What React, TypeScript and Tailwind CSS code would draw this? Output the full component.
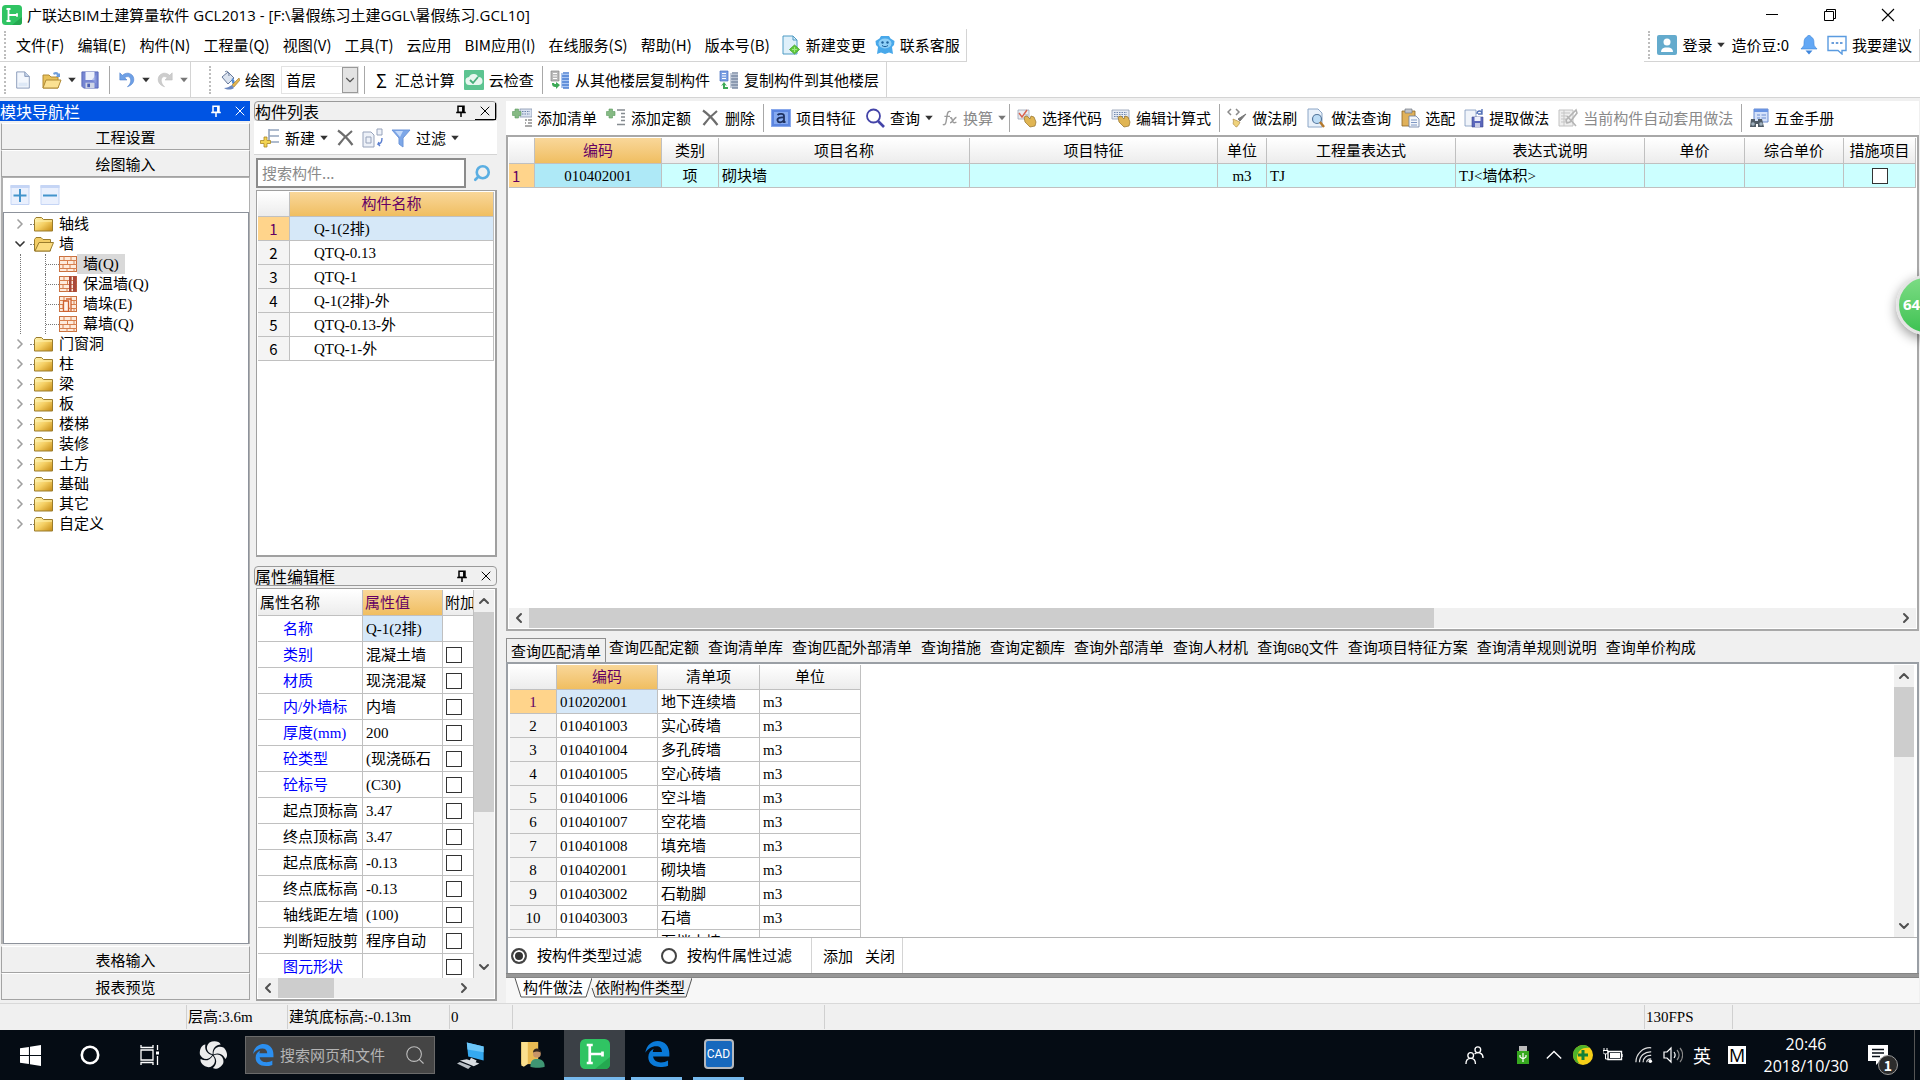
import { useState } from 'react';
import type { ReactNode } from 'react';
import { X, Search, ChevronUp, ChevronDown, ChevronLeft, ChevronRight } from 'lucide-react';

/* ---------- icons ---------- */

function Svg({ children, className = 'w-5 h-5', box = 20 }: { children: ReactNode; className?: string; box?: number }) {
  return (
    <svg viewBox={`0 0 ${box} ${box}`} className={`${className} shrink-0`} fill="none" aria-hidden="true">
      {children}
    </svg>
  );
}

const LogoIcon = ({ className = 'w-5 h-5' }: { className?: string }) => (
  <Svg className={className}>
    <rect x="0" y="0" width="20" height="20" rx="3.5" fill="#30c463" />
    <path d="M10 20 20 12v5a3 3 0 0 1-3 3z" fill="#24a850" />
    <path d="M4.500 4h4M6.500 4v12M4.500 16h4M6.500 10H15M15 8.300v3.400" stroke="#fff" strokeWidth="1.800" />
  </Svg>
);

const NewFileIcon = () => (
  <Svg className="w-[18px] h-[18px]">
    <path d="M3 1h9l5 5v13H3z" fill="#f3f7fd" stroke="#8294b5" />
    <path d="M12 1v5h5" fill="#c5d4ea" stroke="#8294b5" />
    <path d="M5 13h10v4H5z" fill="#dde8f6" />
  </Svg>
);

const OpenIcon = ({ className = 'w-5 h-5' }: { className?: string }) => (
  <Svg className={className}>
    <path d="M1 5h6l2 2h7v11H1z" fill="#e8c15a" stroke="#b08a35" />
    <path d="M4 10h15l-3 8H1z" fill="#fbe192" stroke="#b08a35" />
    <path d="M11 3c3-2 5-1 6 1l1-1v4h-4l1-2c-1-1-2-1-3 0z" fill="#6f9edb" />
  </Svg>
);

const SaveIcon = () => (
  <Svg className="w-[18px] h-[18px]">
    <path d="M1 1h18v18H3l-2-2z" fill="#7585d2" stroke="#5565b5" />
    <path d="M5 1h10v9H5z" fill="#edf1fb" />
    <path d="M5 13h10v6H5z" fill="#cfd5e6" />
    <path d="M7 14h3v4H7z" fill="#4b5fb5" />
    <path d="M12 10 17 4v10z" fill="#95a5e5" opacity=".6" />
  </Svg>
);

const UndoIcon = ({ off = false }: { off?: boolean }) => (
  <Svg className={off ? 'w-[18px] h-[18px] -scale-x-100' : 'w-[18px] h-[18px]'}>
    <path d="M2 2v8h8L7.500 7.500C11 4.500 15 7 14 12c-.5 2.500-2 4-3.500 5.500C15 16 18 13 17.500 8.500 17 3 10 0 4.800 4.800z" fill={off ? '#cdcdcd' : '#6ea0e6'} stroke={off ? '#bcbcbc' : '#4a7ccb'} strokeWidth=".6" />
  </Svg>
);

const PaintIcon = () => (
  <Svg>
    <path d="M2 7 8 2l6 6-6 6z" fill="#dbe3ef" stroke="#66799b" />
    <path d="M5 2c2-2 4 0 4 4" stroke="#66799b" />
    <path d="M12 8c3 2 3 4 2 7-2-1-3-4-2-7z" fill="#4e8ad6" />
    <path d="m19 8-7 7 2 2 6-7z" fill="#e2b44f" stroke="#9a7428" strokeWidth=".6" />
    <path d="M4 18c3 2 7 2 10 0l-2-3c-3 2-5 3-8 3z" fill="#6b87bf" />
  </Svg>
);

const CloudCheckIcon = () => (
  <Svg>
    <rect width="20" height="20" rx="1" fill="#5cc491" />
    <path d="M10 4a4 4 0 0 1 4 3 4 4 0 0 1 1 8H6a4 4 0 0 1-1-8 5 5 0 0 1 5-3z" fill="#fff" opacity=".85" />
    <path d="m6 10 3 3 5-6" stroke="#46ad7a" strokeWidth="1.800" />
  </Svg>
);

const CopyFloorIcon = ({ flip = false }: { flip?: boolean }) => (
  <Svg>
    <path d="M1 1h8v10H1z" fill={flip ? '#7ba0e3' : '#b9b9b9'} stroke={flip ? '#4971c0' : '#888'} strokeWidth=".7" />
    <path d="M3 3.500h4M3 6h4M3 8.500h4" stroke="#fff" />
    <path d="M13 4h6v14h-6z" fill={flip ? '#b9c3d3' : '#a9c6f3'} />
    <path d="M13 3h6M12 6h7M12 9h7M12 12h7M12 15h7M13 18h6" stroke={flip ? '#7c8ca5' : '#4b7fd2'} strokeWidth="1.500" />
    <path d="M12 3v15" stroke={flip ? '#8c9cb5' : '#5b8ede'} />
    <path d={flip ? 'M9 19H4v-4l-2 1 3-4 3 4-2-1v2h3z' : 'M2 13c0 3 1 4 4 4v2l4-4-4-3v2c-1 0-2 0-2-1z'} fill="#3ca956" />
  </Svg>
);

const ChangeIcon = () => (
  <Svg>
    <path d="M2 1h10l4 4v14H2z" fill="#dff0fa" stroke="#4f9bc4" />
    <path d="M12 1v4h4" stroke="#4f9bc4" />
    <path d="m13.500 10 5 4.500-5 4.500-5-4.500z" fill="#62cb3c" stroke="#3c9a22" strokeWidth=".8" />
    <path d="M13.500 12v5M11 14.500h5" stroke="#9fe685" />
  </Svg>
);

const MascotIcon = () => (
  <Svg>
    <path d="M6 1h8l1.500 2.500L19.500 6 19 10l-2 2 1 7-4-1.500L10 19l-4-1.500L2 19l1-7-2-2L.500 6l4-2.500z" fill="#48a8ea" />
    <ellipse cx="10" cy="8.500" rx="6.500" ry="5" fill="#8fd0f7" />
    <circle cx="7.500" cy="7.500" r="1.200" fill="#1b5f99" />
    <circle cx="12.500" cy="7.500" r="1.200" fill="#1b5f99" />
    <path d="M7 10.500c2 1.500 4 1.500 6 0" stroke="#1b5f99" />
  </Svg>
);

const LoginIcon = () => (
  <Svg>
    <rect width="20" height="20" rx="2" fill="#64abcd" />
    <circle cx="10" cy="7" r="3.500" fill="#fff" />
    <path d="M4 17c0-3 2-4 4-4.500h4c2 .5 4 1.500 4 4.500z" fill="#fff" />
  </Svg>
);

const BellIcon = () => (
  <Svg>
    <path d="M10 0c1 0 1.500.8 1.500 1.600C15 3 15 6 15 9c0 3 2 3 3 5H2c1-2 3-2 3-5 0-3 0-6 3.500-7.400C8.500.8 9 0 10 0z" fill="#63a8f5" stroke="#4187d6" strokeWidth=".6" />
    <path d="M6.500 15.500h7L10 19.500z" fill="#3f86dc" />
  </Svg>
);

const SuggestIcon = () => (
  <Svg>
    <path d="M1 1.500h18v14h-4V19l-4-3.500H1z" fill="#fff" stroke="#5a9be0" strokeWidth="1.400" />
    <path d="M4.500 8h2.500M8.800 8h2.500M13 8h2.500" stroke="#3c80cf" strokeWidth="1.600" />
  </Svg>
);

const PlusGreen = () => <path d="M3 1h3.500v2.500H9v4H6.500V10H3V7.500H.5v-4H3z" fill="#86ba84" stroke="#5d9a5f" strokeWidth=".6" />;

const AddListIcon = () => (
  <Svg>
    <rect x="8" y="1" width="12" height="8" fill="#dbe3f0" stroke="#8795ae" strokeWidth=".8" />
    <path d="M10 3.500h8M10 6h8" stroke="#6c82aa" strokeDasharray="1.500 1" />
    <path d="M13 12h2M16 12h4M13 15h1M16 15h4M13 18h7" stroke="#8d8d8d" strokeWidth="1.300" />
    <PlusGreen />
  </Svg>
);

const AddQuotaIcon = () => (
  <Svg>
    <path d="M11 2h8M15 5.500h4M15 9h4M15 12.500h4M11 16.500h8" stroke="#858b90" strokeWidth="1.400" />
    <PlusGreen />
  </Svg>
);

const CrossIcon = () => (
  <Svg>
    <path d="M3 2.500C8 6 13 11 17.500 17M17 3C12 7 7 12 3.500 17" stroke="#6d6d6d" strokeWidth="2.200" />
  </Svg>
);

const FeatureIcon = () => (
  <Svg>
    <rect x=".5" y="1.500" width="19" height="17" fill="#5b85e0" stroke="#88a8ec" />
    <path d="M3 4h14v12H3z" fill="#86aaf0" />
    <path d="M6.500 7C8 5.500 13 5 13 8v6h1.500M13 9.500C9 9 6 10 6.500 12.500 7 15 11 15 13 12" stroke="#1f3261" strokeWidth="1.800" />
  </Svg>
);

const FindIcon = ({ color = '#4444a8' }: { color?: string }) => (
  <Svg>
    <circle cx="8.500" cy="8" r="6.500" stroke={color} strokeWidth="1.800" />
    <path d="m13 13 6 6" stroke={color} strokeWidth="2.600" />
  </Svg>
);

const FxIcon = () => (
  <Svg className="w-4 h-5">
    <path d="M11 2c-3-1-4 1-4.500 4L5 15c-.5 3-2 4-4 3M3 8h7M10 10c2-1 2 0 3 3s2 4 5 2M18 9c-3 1-5 7-8 7" stroke="#9b9b9b" strokeWidth="1.800" />
  </Svg>
);

const Hand = () => <path d="m7 9 3-1 3 3 1-3 3 1 2 5-1 4-5 1-5-5z" fill="#e0b553" stroke="#94702a" strokeWidth=".7" />;

const SelectCodeIcon = () => (
  <Svg>
    <path d="M1 2h11v9H1z" fill="#e9edf3" stroke="#9aa5b5" strokeWidth=".8" />
    <path d="m2 5 3 4 5-7" stroke="#d9614c" strokeWidth="1.400" />
    <path d="M8 7h3" stroke="#9aa5b5" />
    <Hand />
  </Svg>
);

const EditFormulaIcon = () => (
  <Svg>
    <path d="M1 2h17v9H1z" fill="#e6ebf3" stroke="#8e9bb1" strokeWidth=".8" />
    <path d="M3 4.500h13M3 6.500h13M3 8.500h13" stroke="#7187ad" strokeDasharray="1.500 1" />
    <Hand />
  </Svg>
);

const BrushIcon = () => (
  <Svg>
    <path d="M4 1 1 4l3 3M9 1l3 3-3 3" stroke="#8a8a8a" strokeWidth="1.500" />
    <path d="m19 6-6 7-2-2z" fill="#777" stroke="#777" />
    <path d="M6 11 13 14c-1 3-3 5-4 5-1-2-3-2-3-4 1-1 0-3 0-4z" fill="#efd27c" stroke="#a5823a" strokeWidth=".6" />
  </Svg>
);

const PageFindIcon = () => (
  <Svg>
    <path d="M2 1h10l4 4v14H2z" fill="#e9f1fa" stroke="#8ca6c6" />
    <circle cx="11" cy="11" r="4.500" fill="#bcdcf5" stroke="#55779c" strokeWidth="1.200" />
    <path d="m14 14 4 5" stroke="#b5792c" strokeWidth="2.400" />
  </Svg>
);

const PasteIcon = () => (
  <Svg>
    <path d="M2 3h13v15H2z" fill="#e0b15a" stroke="#8c6526" strokeWidth=".8" />
    <path d="M5 1h7v4H5z" fill="#bfc4cc" stroke="#737983" strokeWidth=".7" />
    <path d="M9 8h7l3 3v8H9z" fill="#f4f7fb" stroke="#697fa5" strokeWidth=".8" />
    <path d="M11 12h6M11 14.500h6M11 17h6" stroke="#7e97c4" />
  </Svg>
);

const ExtractIcon = () => (
  <Svg>
    <path d="M1 2h11v16H1z" fill="#f0f4fa" stroke="#7f97bd" strokeWidth=".8" />
    <path d="M13 6c0-4 5-4 5 0M18 1v5h-4" stroke="#5472b8" strokeWidth="1.400" />
    <path d="M8 9h11v10H8z" fill="#5b67bb" stroke="#3d478f" strokeWidth=".6" />
    <path d="M10.500 9h6v4h-6z" fill="#eef0fa" />
    <path d="M11 15h5v4h-5z" fill="#c7cbe6" />
  </Svg>
);

const AutoApplyIcon = () => (
  <Svg>
    <path d="M1 2h14v16H1z" fill="#eee" stroke="#c2c2c2" />
    <path d="M3 5h9M3 8h6M3 11h5M3 14h6M6 2v16" stroke="#c5c5c5" />
    <path d="M18 2 8 12l1 3 3-1 7-9zM9 8l9 10" stroke="#b4b4b4" strokeWidth="1.600" />
  </Svg>
);

const HardwareIcon = () => (
  <Svg>
    <path d="M5 1h14v13H5z" fill="#d5e2fa" stroke="#6b8cd0" />
    <path d="M5 1h14v3H5z" fill="#6a94e2" />
    <path d="M8 7h3M12.500 7H17M8 10h3M12.500 10H17" stroke="#6b8cd0" />
    <path d="M2 11h4v2h3v-2h4l2 8H9v-3H7v3H1z" fill="#4f5b66" />
    <circle cx="4" cy="16" r="1.800" fill="#9fb0bd" />
    <circle cx="12" cy="16" r="1.800" fill="#9fb0bd" />
  </Svg>
);

const NewItemIcon = () => (
  <Svg>
    <path d="M9 1v14M9 2h10M9 8h10M9 14h10" stroke="#94a5be" strokeWidth="1.600" />
    <path d="M4 9h3v3.500h3.500v3H7V19H4v-3.500H.5v-3H4z" fill="#f3d451" stroke="#a98724" strokeWidth=".8" />
  </Svg>
);

const CopyItemIcon = () => (
  <Svg className="w-[22px] h-5">
    <path d="M0 4h8l3 3v12H0z" fill="#edf1f8" stroke="#97a3bb" />
    <path d="M3 9h5v6H3z" stroke="#97a3bb" />
    <path d="M14 1h5v6h-5z" fill="#edf1f8" stroke="#97a3bb" />
    <path d="M19 10c0 4-1 6-4 6l1-2M15 16l2 2" stroke="#5b7fd0" strokeWidth="1.400" />
  </Svg>
);

const FilterIcon = () => (
  <Svg>
    <path d="M1 2h18l-7 8v9l-4-3v-6z" fill="#7da7e8" stroke="#6c95d9" />
    <path d="M4 3h8L9 9z" fill="#c4dafa" />
  </Svg>
);

const PinIcon = () => (
  <Svg className="w-3 h-3.5">
    <path d="M5 2h10v10H5zM2 12.500h16M10 13v7M13 2v10" stroke="currentColor" strokeWidth="2.500" />
  </Svg>
);

const FolderIcon = () => (
  <svg viewBox="0 0 19 16" className="w-[19px] h-4 shrink-0" aria-hidden="true">
    <defs>
      <linearGradient id="folder" x1="0" y1="0" x2="1" y2="1">
        <stop offset="0" stopColor="#fff6b8" />
        <stop offset=".5" stopColor="#f5cf63" />
        <stop offset="1" stopColor="#c58a13" />
      </linearGradient>
    </defs>
    <path d="M.5 3.500 2 1.500h5.500l2 2h9v11.500H.500z" fill="url(#folder)" stroke="#9a7c2c" />
    <path d="M1 5h17" stroke="#fff3b0" />
  </svg>
);

const FolderOpenIcon = () => (
  <svg viewBox="0 0 20 16" className="w-5 h-4 shrink-0" aria-hidden="true">
    <path d="M.5 3.500 2 1.500h5l2 2h7.500V15H.500z" fill="#f2cd66" stroke="#9a7c2c" />
    <path d="M5 6.500h14.500L16 15H1z" fill="#fbdc80" stroke="#9a7c2c" />
  </svg>
);

const BrickIcon = ({ kind }: { kind: string }) => (
  <svg viewBox="0 0 18 16" className="w-[18px] h-4 shrink-0" fill="none" aria-hidden="true">
    <rect x=".5" y=".5" width="17" height="15" fill="#fdebdc" stroke="#c9703f" />
    <path d="M0 4.500h18M0 8.500h18M0 12.500h18M5 0v4.500M12 0v4.500M8.500 4.500v4M15 4.500v4M4 8.500v4M11 8.500v4M8 12.500v3.500M15 12.500v3.500" stroke="#d6804f" />
    {kind === 'insulated' && <path d="M10 0h2.500v16H10zM14 0h3.500v16H14z" fill="#a8493a" />}
    {kind === 'pier' && <path d="M4.500 5h5v10.500h-5zM7 3h5v12" fill="#fff3ea" stroke="#cf6230" strokeWidth="1.300" />}
  </svg>
);

const Caret = ({ off = false }: { off?: boolean }) => (
  <Svg className="w-2 h-1.5" box={8}>
    <path d="M-1 1h10L4 7z" fill={off ? '#777' : '#333'} />
  </Svg>
);

const Grip = () => <span className="w-[3px] h-7 border-l-2 border-dotted border-[#bdbdbd]" />;
const Sep = () => <span className="-ml-px -mr-0.5 w-px h-7 bg-[#a8a8a8]" />;

/* ---------- data ---------- */

const menus = ['文件(F)', '编辑(E)', '构件(N)', '工程量(Q)', '视图(V)', '工具(T)', '云应用', 'BIM应用(I)', '在线服务(S)', '帮助(H)', '版本号(B)'];

const walls = [
  { label: '墙(Q)', kind: 'plain' },
  { label: '保温墙(Q)', kind: 'insulated' },
  { label: '墙垛(E)', kind: 'pier' },
  { label: '幕墙(Q)', kind: 'plain' },
];

const folders = ['门窗洞', '柱', '梁', '板', '楼梯', '装修', '土方', '基础', '其它', '自定义'];

const components = ['Q-1(2排)', 'QTQ-0.13', 'QTQ-1', 'Q-1(2排)-外', 'QTQ-0.13-外', 'QTQ-1-外'];

const attributes = [
  { name: '名称', value: 'Q-1(2排)', blue: true },
  { name: '类别', value: '混凝土墙', blue: true },
  { name: '材质', value: '现浇混凝', blue: true },
  { name: '内/外墙标', value: '内墙', blue: true },
  { name: '厚度(mm)', value: '200', blue: true },
  { name: '砼类型', value: '(现浇砾石', blue: true },
  { name: '砼标号', value: '(C30)', blue: true },
  { name: '起点顶标高', value: '3.47' },
  { name: '终点顶标高', value: '3.47' },
  { name: '起点底标高', value: '-0.13' },
  { name: '终点底标高', value: '-0.13' },
  { name: '轴线距左墙', value: '(100)' },
  { name: '判断短肢剪', value: '程序自动' },
  { name: '图元形状', value: '', blue: true },
];

const queryTabs = ['查询匹配清单', '查询匹配定额', '查询清单库', '查询匹配外部清单', '查询措施', '查询定额库', '查询外部清单', '查询人材机', '查询GBQ文件', '查询项目特征方案', '查询清单规则说明', '查询单价构成'];

const matches = [
  ['010202001', '地下连续墙'],
  ['010401003', '实心砖墙'],
  ['010401004', '多孔砖墙'],
  ['010401005', '空心砖墙'],
  ['010401006', '空斗墙'],
  ['010401007', '空花墙'],
  ['010401008', '填充墙'],
  ['010402001', '砌块墙'],
  ['010403002', '石勒脚'],
  ['010403003', '石墙'],
  ['010403004', '石挡土墙'],
];

const headCell = 'border-r border-b border-[#c0c0c0] bg-linear-to-b from-white to-[#ececec] font-normal p-0';
const activeHead = 'border-r border-b border-[#c0c0c0] bg-linear-to-b from-[#f9d799] to-[#f0be60] font-normal p-0 text-[#640064]';
const cell = 'border-r border-b border-[#c0c0c0] p-0 px-[3px] overflow-hidden';
const numberCell = 'border-r border-b border-[#c0c0c0] p-0 text-center';
const nameCell = 'border-r border-b border-[#c0c0c0] p-0 pl-[25px]';
const checkbox = 'appearance-none block w-4 h-4 border border-[#333] bg-white checked:bg-[#333]';

/* ---------- small parts ---------- */

function Tool({ icon, label, caret = false, off = false }: { icon: ReactNode; label: string; caret?: boolean; off?: boolean }) {
  return (
    <button disabled={off} className={off ? 'flex items-center gap-[5px] text-[#8a8a8a]' : 'flex items-center gap-[5px]'}>
      {icon}
      {label}
      {caret && <Caret off={off} />}
    </button>
  );
}

function PanelTitle({ title, raised = false }: { title: string; raised?: boolean }) {
  return (
    <div className="flex items-center h-5 border border-[#9a9a9a] rounded-sm bg-[#f0f0f0] text-base leading-4 shrink-0">
      <h2 className="flex-1">{title}</h2>
      <button aria-label="固定" className="px-1"><PinIcon /></button>
      <button aria-label="关闭" className={raised ? 'px-0.5 ml-1 border-r border-b border-black' : 'px-0.5 ml-1'}>
        <X className="w-4 h-4" strokeWidth={1.5} />
      </button>
    </div>
  );
}

function NavButton({ label }: { label: string }) {
  return (
    <button className="w-full h-[27px] border border-[#a3a3a3] border-t-white bg-[#f0f0f0] text-center shrink-0">
      {label}
    </button>
  );
}

function TreeFolder({ label }: { label: string }) {
  return (
    <li>
      <button className="flex items-center h-5 pl-2">
        <ChevronRight className="w-4 h-4 text-[#a0a0a0]" strokeWidth={2.5} />
        <span className="ml-0.5 w-1 border-t border-dotted border-[#888]" />
        <FolderIcon />
        <span className="ml-1.5">{label}</span>
      </button>
    </li>
  );
}

/* ---------- regions ---------- */

function TitleBar() {
  return (
    <header className="flex items-center h-[29px] pl-[2px] shrink-0">
      <LogoIcon />
      <h1 className="ml-[5px] flex-1 font-['Open_Sans','Noto_Sans_CJK_SC',sans-serif]">广联达BIM土建算量软件 GCL2013 - [F:\暑假练习土建GGL\暑假练习.GCL10]</h1>
      <div className="flex items-center gap-[38px] pr-[22px]">
        <button aria-label="最小化" className="w-5 h-5">
          <Svg><path d="M4 9.500h12" stroke="#000" /></Svg>
        </button>
        <button aria-label="还原" className="w-5 h-5">
          <Svg><path d="M4.500 6.500h9v9h-9zM6.500 6.500v-2h9v9h-2" stroke="#000" /></Svg>
        </button>
        <button aria-label="关闭窗口" className="w-5 h-5">
          <Svg><path d="m4 4 12 12M16 4 4 16" stroke="#000" strokeWidth="1.100" /></Svg>
        </button>
      </div>
    </header>
  );
}

function MenuBar() {
  return (
    <div className="flex justify-between h-[33px] shrink-0">
      <nav className="flex items-center gap-[13px] pl-1 pr-1.5 border-r border-b border-[#d4d4d4]">
        <Grip />
        <div className="flex items-center gap-[13px] -ml-1">
          {menus.map((m) => (
            <button key={m}>{m}</button>
          ))}
        </div>
        <div className="flex items-center gap-[9px] -ml-0.5">
          <Tool icon={<ChangeIcon />} label="新建变更" />
          <Tool icon={<MascotIcon />} label="联系客服" />
        </div>
      </nav>
      <div className="flex items-center gap-1.5 pl-1 pr-[7px] border-b border-r border-[#d4d4d4]">
        <Grip />
        <Tool icon={<LoginIcon />} label="登录" caret />
        <button>造价豆:0</button>
        <button aria-label="消息" className="ml-1 mr-0.5"><BellIcon /></button>
        <Tool icon={<SuggestIcon />} label="我要建议" />
      </div>
    </div>
  );
}

function MainToolbar() {
  return (
    <div className="flex h-9 border-b border-[#d4d4d4] shrink-0">
      <div className="flex items-center pl-1 pr-0.5 border-r border-[#d4d4d4]">
        <Grip />
        <button aria-label="新建" className="px-[7px]"><NewFileIcon /></button>
        <button aria-label="打开" className="flex items-center gap-1.5 px-[3px]"><OpenIcon /><Caret /></button>
        <button aria-label="保存" className="px-0.5"><SaveIcon /></button>
        <span className="mx-2 w-px h-7 bg-[#a8a8a8]" />
        <button aria-label="撤销" className="flex items-center gap-1.5"><UndoIcon /><Caret /></button>
        <button aria-label="重做" className="flex items-center gap-1.5 ml-1.5"><UndoIcon off /><Caret off /></button>
      </div>
      <div className="flex items-center gap-[9px] pl-[18px] pr-[7px] border-r border-[#d4d4d4]">
        <Grip />
        <div className="flex items-center gap-1.5 -ml-px">
          <Tool icon={<PaintIcon />} label="绘图" />
          <div className="relative w-[78px] h-7 border border-[#e3e3e3]">
            <select aria-label="楼层" className="appearance-none w-full h-full pl-1 leading-6 bg-white">
              <option>首层</option>
            </select>
            <span className="absolute inset-y-0 right-0 w-4 flex items-center justify-center border border-[#999] bg-[#e3e3e3] pointer-events-none">
              <ChevronDown className="w-3.5 h-3.5 text-[#555]" />
            </span>
          </div>
        </div>
        <span className="-ml-1 w-px h-7 bg-[#a8a8a8]" />
        <button className="flex items-center gap-2 ml-0.5"><span className="text-lg">Σ</span>汇总计算</button>
        <Tool icon={<CloudCheckIcon />} label="云检查" />
        <Sep />
        <Tool icon={<CopyFloorIcon />} label="从其他楼层复制构件" />
        <Tool icon={<CopyFloorIcon flip />} label="复制构件到其他楼层" />
      </div>
    </div>
  );
}

function NavPanel() {
  const [wall, setWall] = useState('墙(Q)');

  return (
    <aside className="w-[250px] flex flex-col shrink-0">
      <div className="flex items-center h-5 bg-[#0054e3] text-white text-base leading-4 shrink-0">
        <h2 className="flex-1">模块导航栏</h2>
        <button aria-label="固定" className="px-1"><PinIcon /></button>
        <button aria-label="关闭" className="px-0.5 ml-1"><X className="w-4 h-4" strokeWidth={1.5} /></button>
      </div>
      <div className="flex-1 flex flex-col min-h-0 mt-0.5 ml-px pb-[3px]">
        <NavButton label="工程设置" />
        <NavButton label="绘图输入" />
        <div className="flex-1 flex flex-col min-h-0 mb-0.5 border-l-2 border-[#b0b0b0] border-t border-r bg-white">
          <div className="flex items-center gap-2.5 h-[34px] pl-[7px]">
            {['M10 4v13M3.500 10.500h13', 'M3 10.500h14'].map((d) => (
              <button key={d} aria-label={d.length > 12 ? '展开' : '折叠'} className="w-5 h-5">
                <Svg>
                  <path d="M1 .500h18v19H1z" fill="#eaf0fd" stroke="#c5d5f5" />
                  <path d="M.500 0h19v3H.500z" fill="#c5d5f5" />
                  <path d={d} stroke="#4394cc" strokeWidth="2" />
                </Svg>
              </button>
            ))}
          </div>
          <ul className="flex-1 min-h-0 border border-[#8d929b] pt-px font-['Liberation_Serif','Noto_Sans_CJK_SC',sans-serif]">
            <TreeFolder label="轴线" />
            <li>
              <button className="flex items-center h-5 pl-2">
                <ChevronDown className="w-4 h-4 text-[#333]" strokeWidth={2.5} />
                <span className="ml-0.5 w-1 border-t border-dotted border-[#888]" />
                <FolderOpenIcon />
                <span className="ml-[5px]">墙</span>
              </button>
              <ul className="ml-4 pl-6 border-l border-dotted border-[#777]">
                {walls.map((w) => (
                  <li key={w.label} className="flex items-center h-5 border-l border-dotted border-[#777]">
                    <span className="w-[13px] border-t border-dotted border-[#777]" />
                    <button onClick={() => setWall(w.label)} className="flex items-center h-5">
                      <BrickIcon kind={w.kind} />
                      <span className={wall === w.label ? 'h-5 px-1.5 bg-[#d9d9d9]' : 'h-5 px-1.5'}>{w.label}</span>
                    </button>
                  </li>
                ))}
              </ul>
            </li>
            {folders.map((f) => (
              <TreeFolder key={f} label={f} />
            ))}
          </ul>
        </div>
        <NavButton label="表格输入" />
        <NavButton label="报表预览" />
      </div>
    </aside>
  );
}

function ComponentPanel() {
  const [selected, setSelected] = useState(0);

  return (
    <section className="flex-1 min-h-0 flex flex-col">
      <PanelTitle title="构件列表" raised />
      <div className="flex items-center gap-[7px] h-[34px] pl-1.5 bg-white border-b border-[#d4d4d4] shrink-0">
        <Tool icon={<NewItemIcon />} label="新建" caret />
        <button aria-label="删除"><CrossIcon /></button>
        <button aria-label="复制"><CopyItemIcon /></button>
        <Tool icon={<FilterIcon />} label="过滤" caret />
      </div>
      <div className="flex items-center gap-[7px] h-[35px] pl-0.5 shrink-0">
        <input aria-label="搜索构件" placeholder="搜索构件..." className="w-[210px] h-[30px] px-1 border-2 border-[#8b8b8b] bg-white placeholder:text-[#8a8a8a]" />
        <button aria-label="搜索"><Search className="w-[18px] h-[18px] -scale-x-100 text-[#5aaee2]" strokeWidth={3.5} /></button>
      </div>
      <div className="flex-1 min-h-0 ml-0.5 border border-[#a0a0a0] border-r-2 border-b-2 bg-white p-px font-['Liberation_Serif','Noto_Sans_CJK_SC',sans-serif]">
        <table className="w-[236px] table-fixed border-separate border-spacing-0">
          <colgroup>
            <col className="w-8" />
            <col />
          </colgroup>
          <thead>
            <tr className="h-[25px]">
              <th className={headCell} />
              <th className={activeHead}>构件名称</th>
            </tr>
          </thead>
          <tbody>
            {components.map((name, i) => (
              <tr key={name} className="h-6" onClick={() => setSelected(i)}>
                <td className={`${numberCell} font-['Noto_Sans_CJK_SC',sans-serif] ${selected === i ? 'bg-[#ffd48b] text-[#640064]' : 'bg-[#f4f4f4]'}`}>{i + 1}</td>
                <td className={`border-r border-b border-[#c0c0c0] p-0 pl-6 ${selected === i ? 'bg-[#d6e8f8]' : ''}`}>{name}</td>
              </tr>
            ))}
          </tbody>
        </table>
      </div>
    </section>
  );
}

function AttributePanel() {
  return (
    <section className="h-[437px] flex flex-col shrink-0 mt-[9px] pb-0.5">
      <PanelTitle title="属性编辑框" />
      <div className="flex-1 min-h-0 mt-0.5 ml-0.5 flex flex-col border border-[#a0a0a0] border-r-2 border-b-2 bg-white p-px font-['Liberation_Serif','Noto_Sans_CJK_SC',sans-serif]">
        <div className="flex-1 min-h-0 flex">
          <div className="flex-1 min-w-0 overflow-hidden">
            <table className="w-[216px] table-fixed border-separate border-spacing-0">
              <colgroup>
                <col className="w-[105px]" />
                <col className="w-20" />
                <col />
              </colgroup>
              <thead>
                <tr className="h-[26px]">
                  <th className={headCell}><span className="flex pl-0.5">属性名称</span></th>
                  <th className={activeHead}><span className="flex pl-0.5">属性值</span></th>
                  <th className={headCell}><span className="flex overflow-hidden whitespace-nowrap pl-0.5">附加</span></th>
                </tr>
              </thead>
              <tbody>
                {attributes.map((a, i) => (
                  <tr key={a.name} className="h-[26px] leading-5 whitespace-nowrap">
                    <td className={a.blue ? `${nameCell} text-[#0000ff]` : nameCell}>{a.name}</td>
                    <td className={i === 0 ? `${cell} bg-[#d6e8f8]` : cell}>{a.value}</td>
                    <td className={cell}>{i > 0 && <input type="checkbox" aria-label={`${a.name}附加`} className={checkbox} />}</td>
                  </tr>
                ))}
              </tbody>
            </table>
          </div>
          <div className="w-5 flex flex-col items-center bg-[#f0f0f0]">
            <ChevronUp className="w-4 h-[22px] text-[#505050]" strokeWidth={3} />
            <div className="w-full h-[200px] bg-[#cdcdcd]" />
            <ChevronDown className="w-4 h-[22px] mt-auto text-[#505050]" strokeWidth={3} />
          </div>
        </div>
        <div className="flex items-center h-5 bg-[#f0f0f0] pr-5 shrink-0">
          <ChevronLeft className="w-5 h-4 text-[#505050]" strokeWidth={3} />
          <div className="w-14 h-5 bg-[#cdcdcd]" />
          <ChevronRight className="w-5 h-4 ml-auto text-[#505050]" strokeWidth={3} />
        </div>
      </div>
    </section>
  );
}

function MethodPane() {
  return (
    <div className="flex-1 min-h-0 flex flex-col border-2 border-[#a8a8a8] bg-white p-px font-['Liberation_Serif','Noto_Sans_CJK_SC',sans-serif]">
      <div className="flex-1 min-h-0 overflow-hidden">
        <table className="w-full table-fixed border-separate border-spacing-0">
          <colgroup>
            <col className="w-[26px]" />
            <col className="w-[127px]" />
            <col className="w-[57px]" />
            <col className="w-[251px]" />
            <col />
            <col className="w-[49px]" />
            <col className="w-[189px]" />
            <col className="w-[189px]" />
            <col className="w-[100px]" />
            <col className="w-[99px]" />
            <col className="w-[72px]" />
          </colgroup>
          <thead>
            <tr className="h-[26px]">
              <th className={headCell} />
              <th className={activeHead}>编码</th>
              {['类别', '项目名称', '项目特征', '单位', '工程量表达式', '表达式说明', '单价', '综合单价', '措施项目'].map((h) => (
                <th key={h} className={headCell}>{h}</th>
              ))}
            </tr>
          </thead>
          <tbody>
            <tr className="h-6 bg-[#ccffff]">
              <td className={`${cell} bg-[#ffd48b] text-[#640064] font-['Noto_Sans_CJK_SC',sans-serif]`}>1</td>
              <td className={`${cell} bg-[#aee9f7] text-center`}>010402001</td>
              <td className={`${cell} text-center`}>项</td>
              <td className={cell}>砌块墙</td>
              <td className={cell} />
              <td className={`${cell} text-center`}>m3</td>
              <td className={cell}>TJ</td>
              <td className={cell}>TJ&lt;墙体积&gt;</td>
              <td className={cell} />
              <td className={cell} />
              <td className={cell}>
                <input type="checkbox" aria-label="措施项目" className={`${checkbox} mx-auto`} />
              </td>
            </tr>
          </tbody>
        </table>
      </div>
      <div className="flex items-center h-5 bg-[#f0f0f0] shrink-0">
        <ChevronLeft className="w-5 h-4 text-[#505050]" strokeWidth={3} />
        <div className="w-9/14 h-5 bg-[#cdcdcd]" />
        <ChevronRight className="w-5 h-4 ml-auto text-[#505050]" strokeWidth={3} />
      </div>
    </div>
  );
}

function QueryPane() {
  const [tab, setTab] = useState(queryTabs[0]);
  const [filter, setFilter] = useState('按构件类型过滤');

  return (
    <div className="h-[342px] flex flex-col shrink-0 mt-[5px] font-['Liberation_Serif','Noto_Sans_CJK_SC',sans-serif]">
      <div className="flex items-start h-[26px] pt-0.5 bg-[#f0f0f0] shrink-0 whitespace-nowrap" role="tablist">
        {queryTabs.map((t) => (
          <button
            key={t}
            role="tab"
            aria-selected={tab === t}
            onClick={() => setTab(t)}
            className={tab === t ? 'h-6 px-1 -mr-px pt-0.5 border border-b-0 border-[#8e8e8e]' : 'h-5 pl-1 pr-[5px]'}
          >
            {t.split('GBQ').map((part, i) => (
              <span key={part}>
                {i > 0 && <span className="font-['Liberation_Mono',monospace] text-xs">GBQ</span>}
                {part}
              </span>
            ))}
          </button>
        ))}
      </div>
      <div className="flex-1 min-h-0 flex flex-col border-2 border-b-0 border-[#9a9fa5]">
        <div className="flex-1 min-h-0 flex border-b border-[#b5b5b5] bg-white pt-px pl-0.5 pr-[3px]">
          <div className="flex-1 overflow-hidden">
            <table className="w-[351px] table-fixed border-separate border-spacing-0">
              <colgroup>
                <col className="w-[47px]" />
                <col className="w-[101px]" />
                <col className="w-[102px]" />
                <col />
              </colgroup>
              <thead>
                <tr className="h-[25px]">
                  <th className={headCell} />
                  <th className={activeHead}>编码</th>
                  <th className={headCell}>清单项</th>
                  <th className={headCell}>单位</th>
                </tr>
              </thead>
              <tbody>
                {matches.map(([code, name], i) => (
                  <tr key={code} className="h-6">
                    <td className={`${numberCell} ${i === 0 ? 'bg-[#ffd48b] text-[#640064]' : 'bg-[#f4f4f4]'}`}>{i + 1}</td>
                    <td className={i === 0 ? `${cell} bg-[#d6e8f8]` : cell}>{code}</td>
                    <td className={cell}>{name}</td>
                    <td className={cell}>m3</td>
                  </tr>
                ))}
              </tbody>
            </table>
          </div>
          <div className="w-5 flex flex-col items-center bg-[#f0f0f0]">
            <ChevronUp className="w-4 h-[22px] text-[#505050]" strokeWidth={3} />
            <div className="w-full h-[70px] bg-[#cdcdcd]" />
            <ChevronDown className="w-4 h-[22px] mt-auto text-[#505050]" strokeWidth={3} />
          </div>
        </div>
        <div className="flex items-center h-[35px] pl-[3px] bg-white shrink-0">
          {['按构件类型过滤', '按构件属性过滤'].map((f) => (
            <label key={f} className="flex items-center gap-2.5 mr-[19px]">
              <input
                type="radio"
                name="filter"
                checked={filter === f}
                onChange={() => setFilter(f)}
                className="appearance-none w-4 h-4 rounded-full border-2 border-[#444] bg-white checked:bg-[#333] checked:shadow-[inset_0_0_0_2px_white]"
              />
              {f}
            </label>
          ))}
          <div className="flex items-center gap-3 h-full px-[7px] border-x border-[#d4d4d4] font-['Noto_Sans_CJK_SC',sans-serif]">
            <button className="pl-1">添加</button>
            <button>关闭</button>
          </div>
        </div>
      </div>
      <div className="h-[5px] bg-[#979797] border-y border-[#858585] shrink-0" />
    </div>
  );
}

function SheetTabs() {
  return (
    <div className="h-[25px] flex pl-2 bg-[#f7f7f7] shrink-0 font-['Liberation_Serif','Noto_Sans_CJK_SC',sans-serif]">
      <button className="relative w-[78px] h-5">
        <svg viewBox="0 0 78 20" className="absolute inset-0 w-full h-full" preserveAspectRatio="none">
          <path d="M1 0l6 19h65l6-19" fill="#fff" stroke="#555" />
        </svg>
        <span className="relative">构件做法</span>
      </button>
      <button className="relative w-[104px] h-5 -ml-1">
        <svg viewBox="0 0 104 20" className="absolute inset-0 w-full h-full" preserveAspectRatio="none">
          <path d="M4 10l3 9h91l6-19" fill="#efefef" stroke="#555" />
        </svg>
        <span className="relative">依附构件类型</span>
      </button>
    </div>
  );
}

function Workspace() {
  return (
    <main className="flex-1 min-w-0 flex flex-col bg-[#f0f0f0] pr-px">
      <div className="flex items-center gap-[9px] h-[34px] pl-1.5 bg-white shrink-0 whitespace-nowrap">
        <Tool icon={<AddListIcon />} label="添加清单" />
        <Tool icon={<AddQuotaIcon />} label="添加定额" />
        <Tool icon={<CrossIcon />} label="删除" />
        <Sep />
        <Tool icon={<FeatureIcon />} label="项目特征" />
        <Tool icon={<FindIcon />} label="查询" caret />
        <Tool icon={<FxIcon />} label="换算" caret off />
        <span className="-ml-1.5 -mr-0.5 w-px h-7 bg-[#a8a8a8]" />
        <Tool icon={<SelectCodeIcon />} label="选择代码" />
        <Tool icon={<EditFormulaIcon />} label="编辑计算式" />
        <Sep />
        <Tool icon={<BrushIcon />} label="做法刷" />
        <Tool icon={<PageFindIcon />} label="做法查询" />
        <Tool icon={<PasteIcon />} label="选配" />
        <Tool icon={<ExtractIcon />} label="提取做法" />
        <Tool icon={<AutoApplyIcon />} label="当前构件自动套用做法" off />
        <Sep />
        <Tool icon={<HardwareIcon />} label="五金手册" />
      </div>
      <MethodPane />
      <QueryPane />
      <SheetTabs />
    </main>
  );
}

function StatusBar() {
  return (
    <div className="flex items-center h-[27px] border-t border-[#d9d9d9] bg-[#f0f0f0] shrink-0 font-['Liberation_Serif','Noto_Sans_CJK_SC',sans-serif]">
      <span className="w-[186px]" />
      <span className="w-[101px] h-6 pl-px leading-6 border-l border-[#d0d0d0]">层高:3.6m</span>
      <span className="w-[162px] h-6 pl-px leading-6 border-l border-[#d0d0d0]">建筑底标高:-0.13m</span>
      <span className="w-[63px] h-6 pl-px leading-6 border-l border-[#d0d0d0]">0</span>
      <span className="w-[312px] h-6 border-l border-[#d0d0d0]" />
      <span className="flex-1 h-6 border-l border-[#d0d0d0]" />
      <span className="w-[88px] h-6 pl-px leading-6 border-l border-[#d0d0d0]">130FPS</span>
      <span className="w-[188px] h-6 border-l border-[#d0d0d0]" />
    </div>
  );
}

const EdgeIcon = ({ className, color = '#0a7ad8' }: { className: string; color?: string }) => (
  <Svg className={className}>
    <path d="M1 9C2 3 6 0 10.500 0 16 0 19.500 4 19.500 9.500V12H7c.3 3 3 4.500 6 4.500 2.200 0 4-.6 5.500-1.500v4c-2 .8-4 1-6 1C7 20 3.300 17 3.300 12.500 3.300 9.500 5 7.200 7.500 6 6.800 7 6.900 8 6.800 8.500h7c0-3-1.500-4.500-4.500-4.500C6 4 3 6 1 9z" fill={color} />
  </Svg>
);

function Taskbar() {
  return (
    <footer className="flex items-stretch h-[50px] bg-[#050c14] text-white shrink-0">
      <div className="flex items-center">
        <button aria-label="开始" className="w-[60px] flex justify-center">
          <Svg className="w-[21px] h-[21px]">
            <path d="M0 3 8.500 1.800v7.700H0zM9.500 1.700 20 0v9.500H9.500zM0 10.500h8.500v7.700L0 17zM9.500 10.500H20V20L9.500 18.300z" fill="#fff" />
          </Svg>
        </button>
        <button aria-label="小娜" className="w-[60px] flex justify-center">
          <Svg><circle cx="10" cy="10" r="8.200" stroke="#fff" strokeWidth="2.600" /></Svg>
        </button>
        <button aria-label="任务视图" className="w-[60px] flex justify-center">
          <Svg>
            <path d="M1 5h12v10H1zM1 0v2.500h12V0M1 20v-2.500h12V20M17.500 0v5M17.500 11v9" stroke="#fff" strokeWidth="1.300" />
            <path d="M16 6.500h3v3h-3z" fill="#fff" />
          </Svg>
        </button>
        <button aria-label="浏览器" className="w-[65px] flex justify-center">
          <Svg className="w-7 h-7">
            {[0, 72, 144, 216, 288].map((a) => (
              <path key={a} d="M9.800 9.500C5 8.500 4.500 3.500 7.500 1c3-1.500 7-1 8 1.500C12 3 9.500 5 9.800 9.500z" fill="#ececec" transform={`rotate(${a} 10 10)`} />
            ))}
          </Svg>
        </button>
        <div className="flex items-center w-[190px] h-[38px] px-1.5 border border-[#6a6a6a] bg-[#454545]">
          <EdgeIcon className="w-[22px] h-[22px]" color="#2b8ff0" />
          <input aria-label="搜索网页和文件" placeholder="搜索网页和文件" className="min-w-0 flex-1 pl-1.5 bg-transparent placeholder:text-[#b4b4b4]" />
          <Search className="w-[22px] h-[22px] mr-0.5 text-[#bdbdbd]" strokeWidth={1.2} />
        </div>
      </div>
      <div className="flex items-center ml-[5px]">
        <button aria-label="此电脑" className="w-[62px] flex justify-center">
          <Svg className="w-7 h-7">
            <path d="M7 1 19 4v10L8 11z" fill="#35a9f0" />
            <path d="M7 1 19 4v4L7.500 6z" fill="#6cc6f8" />
            <path d="m10 12 4 2-1 2-4-2zM2 14l5-1 9 3-4 2z" fill="#d9dde1" />
            <path d="m0 16 2-1 8 3-2 2z" fill="#b9bfc5" />
          </Svg>
        </button>
        <button aria-label="文件" className="w-[62px] flex justify-center">
          <Svg className="w-[26px] h-7">
            <path d="M1 0h13v17H1z" fill="#e9bb53" />
            <path d="M1 0h5v17l-3 2-2-1z" fill="#fbe08e" />
            <circle cx="13" cy="9" r="3" fill="#c79468" />
            <path d="M10 8c0-4 6-4 6 0-2-1-4-1-6 0z" fill="#30251e" />
            <path d="M8 19c0-5 2-6 5-6s6 1 6 6c-3 1-8 1-11 0z" fill="#3f9673" />
          </Svg>
        </button>
      </div>
      <button aria-label="GCL2013" className="w-[61px] flex items-center justify-center bg-[#3b4046] border-b-3 border-[#76b9ed]">
        <LogoIcon className="w-[30px] h-[30px]" />
      </button>
      <button aria-label="Edge" className="w-[51px] ml-1.5 flex items-center justify-center border-b-3 border-[#76b9ed]">
        <EdgeIcon className="w-[26px] h-[26px]" />
      </button>
      <button aria-label="CAD" className="w-[51px] ml-[11px] flex items-center justify-center border-b-3 border-[#76b9ed]">
        <span className="flex items-center justify-center w-[30px] h-[30px] rounded-sm border-2 border-[#b5b9be] bg-[#1668bd] text-xs leading-3 font-['Roboto',sans-serif]">CAD</span>
      </button>
      <div className="flex-1 flex items-center justify-end">
        <button aria-label="人脉" className="mr-8">
          <Svg className="w-[19px] h-[19px]">
            <circle cx="13.500" cy="4" r="3" stroke="#fff" strokeWidth="1.400" />
            <circle cx="6" cy="10" r="3" stroke="#fff" strokeWidth="1.400" />
            <path d="M1 19c0-4 2-6 5-6s5 2 5 6M10 8.500c4-3 9-1 9 4" stroke="#fff" strokeWidth="1.400" />
          </Svg>
        </button>
        <button aria-label="USB" className="mr-[15px]">
          <svg viewBox="0 0 14 20" className="w-3.5 h-5" fill="none" aria-hidden="true">
            <path d="M3 1h8v5H3z" fill="#bbb" />
            <path d="M1 6h12v13H1z" fill="#36a81f" />
            <path d="M7 8v9M4 10v2l3 2 3-2v-2" stroke="#fff" strokeWidth="1.200" />
          </svg>
        </button>
        <button aria-label="更多图标" className="mr-2.5">
          <Svg className="w-[18px] h-[18px]"><path d="m2 14 8-8 8 8" stroke="#fff" strokeWidth="1.500" /></Svg>
        </button>
        <button aria-label="安全卫士" className="mr-2.5">
          <Svg>
            <circle cx="10" cy="10" r="10" fill="#f7cf18" />
            <path d="M0 10A10 10 0 0 1 17 3C10 2 5 5 4 12c0 3 1 5 3 7a10 10 0 0 1-7-9z" fill="#4eb32a" />
            <path d="M10 5v10M5 10h10" stroke="#128038" strokeWidth="3" />
          </Svg>
        </button>
        <button aria-label="电池" className="mr-3">
          <Svg>
            <path d="M5 6.500h13.500v8H5zM19 9v3" stroke="#fff" strokeWidth="1.400" />
            <path d="M7 8h10v5H7z" fill="#fff" />
            <path d="M0 5.500h5v2L3.500 9H1.500L0 7.500zM1 3v2M4 3v2M2.500 9v5H5" stroke="#fff" />
          </Svg>
        </button>
        <button aria-label="网络" className="mr-2.5">
          <Svg className="w-[18px] h-[18px]">
            <path d="M1 18C1 9 9 1 18 2M5 18C5 11 11 6 18 6.500M9 18c0-5 4-8 9-7.500M13 18c0-2 2-4 5-3.500" stroke="#ddd" strokeWidth="1.400" />
            <circle cx="17" cy="17" r="2" fill="#fff" />
          </Svg>
        </button>
        <button aria-label="音量" className="mr-2.5">
          <Svg>
            <path d="M1 7h3l4-4v14l-4-4H1z" stroke="#fff" strokeWidth="1.200" />
            <path d="M11 7c1.500 2 1.500 4 0 6" stroke="#fff" strokeWidth="1.200" />
            <path d="M14 5c2.500 3 2.500 7 0 10M17 3c3.500 4 3.500 10 0 14" stroke="#888" strokeWidth="1.200" />
          </Svg>
        </button>
        <button className="mr-[17px] text-lg">英</button>
        <button className="mr-4 w-[18px] h-[18px] bg-white text-black text-lg leading-[18px] flex justify-center font-['Open_Sans',sans-serif]">M</button>
        <button className="w-[88px] text-base leading-[22px] text-center font-['Open_Sans',sans-serif]">
          <span className="block">20:46</span>
          <span className="block">2018/10/30</span>
        </button>
        <button aria-label="通知" className="relative ml-[18px] mr-[26px]">
          <Svg className="w-5 h-5">
            <path d="M0 0h20v16h-8l-4 4v-4H0z" fill="#fff" />
            <path d="M4 4.500h12M4 8h12M4 11.500h8" stroke="#050c14" strokeWidth="1.300" />
          </Svg>
          <span className="absolute left-2.5 top-2.5 w-5 h-5 rounded-full border border-[#999] bg-[#2c2c2c] text-sm leading-[18px] font-bold">1</span>
        </button>
        <span className="w-px h-full mr-[5px] bg-[#555]" />
      </div>
    </footer>
  );
}

export default function App() {
  return (
    <div className="relative h-screen flex flex-col overflow-hidden bg-white text-black text-[15px] leading-5 font-['Noto_Sans_CJK_SC',sans-serif]">
      <TitleBar />
      <MenuBar />
      <MainToolbar />
      <div className="flex-1 min-h-0 flex bg-[#f0f0f0] pt-[3px]">
        <NavPanel />
        <div className="w-[243px] ml-1 mr-[9px] flex flex-col shrink-0">
          <ComponentPanel />
          <AttributePanel />
        </div>
        <Workspace />
      </div>
      <StatusBar />
      <Taskbar />
      <div className="absolute top-[275px] -right-9 w-[60px] h-[60px] rounded-full border-3 border-[#e4e4e4] bg-linear-to-b from-[#7bdc84] to-[#3cc252] shadow-[0_4px_12px_rgba(0,0,0,0.4)] text-white font-bold leading-[52px] pl-1 font-['Noto_Sans',sans-serif]">
        64
      </div>
    </div>
  );
}
